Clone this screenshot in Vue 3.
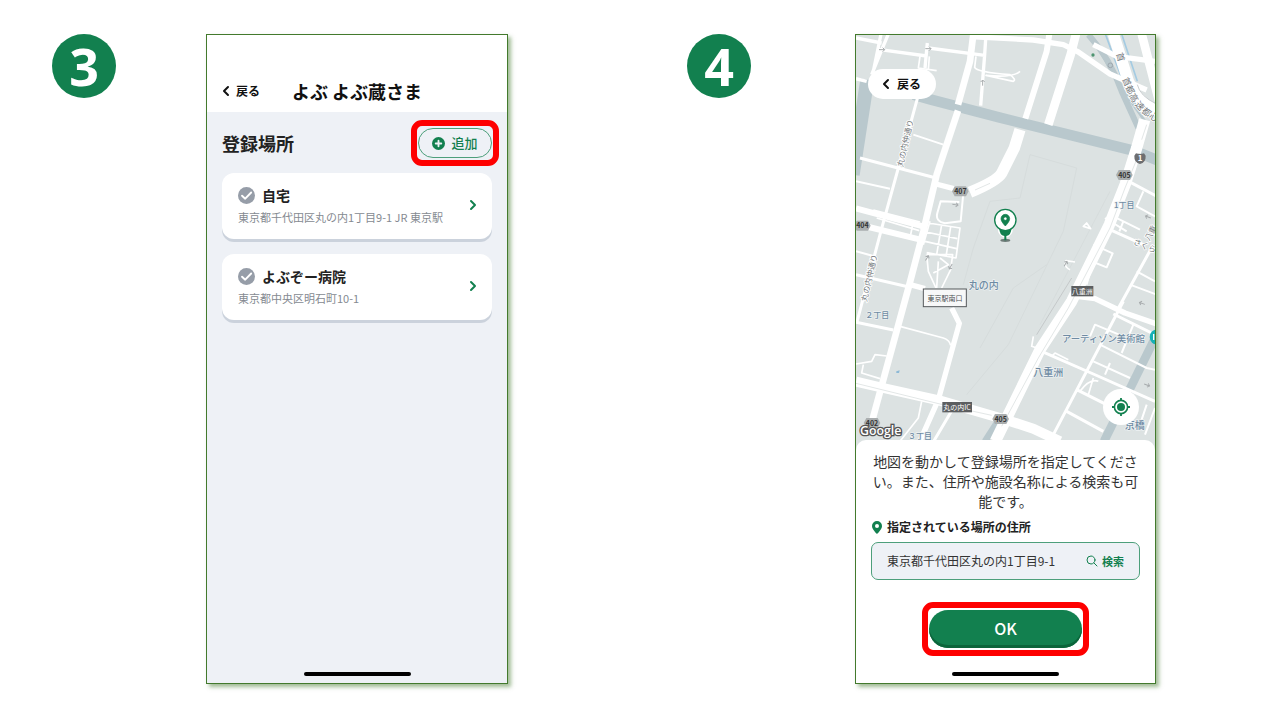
<script setup>
import { ref } from 'vue';

const places = ref([
  { id: 1, name: '自宅', address: '東京都千代田区丸の内1丁目9-1 JR 東京駅' },
  { id: 2, name: 'よぶぞー病院', address: '東京都中央区明石町10-1' },
]);

const address = ref('東京都千代田区丸の内1丁目9-1');

// map roads, grouped by stroke width
const roads = [
  { w: 34, d: 'M1394 285L1370 370 1336 478 1288 600 1175 830 1080 975 946 1250' },
  { w: 30, d: 'M528 1071L610 1090 780 1128 960 1180 1060 1212 1140 1250' },
  { w: 34, d: 'M1020 315L1003 370 965 446Q950 470 870 503' },
  { w: 26, d: 'M1188 28L1172 90 1105 300M1385 28L1440 240' },
  { w: 34, d: 'M1300 28L1345 170Q1375 240 1440 262' },
  { w: 20, d: 'M880 28L870 110 834 240M834 258L770 450 730 620 688 780 606 1080 576 1190' },
  { w: 18, d: 'M1108 28L1100 80 1036 282M528 551L732 606M566 607L718 644' },
  { w: 16, d: 'M870 36L1060 46 1150 60 1195 82 1290 148 1400 196M768 478L830 494M690 780L735 792M815 850L838 896 775 1125 715 1260M1240 60L1310 95 1425 110' },
  { w: 16, d: 'M1190 815L1245 822 1335 865 1430 898' },
  { w: 10, d: 'M528 40L605 55M528 162L560 170M625 28L595 100 575 150M603 28L580 140M595 74L740 94M745 70L914 92M918 28L914 90 902 243M742 55L735 130' },
  { w: 9, d: 'M540 400L768 460M712 222L655 430 604 615 530 895M528 893L640 916M528 750L690 788M1085 980L1240 1048 1425 1130M1330 830L1120 1230M1300 868L1425 930M1420 660L1310 860M1346 470L1440 520M1270 606L1390 660M1190 1095L1290 1145M1160 1160L1270 1220M820 1150L755 1260' },
  { w: 6, d: 'M700 330L790 360M528 470L630 492M528 680L580 694M850 505L842 590 795 596Q765 590 772 565L782 530 838 532M1275 580L1340 620M1300 575L1380 615M1330 590L1318 620M1390 500L1370 545 1425 575M1370 740L1425 770M1350 780L1430 810M1240 660L1298 686 1280 728 1225 706M1230 935L1245 900 1330 935M1360 900L1325 985M1260 960L1400 1030 1425 1035M1240 1010L1350 1060M1290 1015L1275 1050M1425 1150L1395 1230M1400 1140L1375 1215' },
  { w: 5, d: 'M660 905L790 940Q808 945 812 962M528 1018L575 1010 585 990 620 994M550 1020L545 1045 600 1062M725 1130L715 1180 660 1250M888 95L884 128Q890 142 990 150Q1010 165 1000 170L918 152Q1000 160 1020 140M720 95L715 130 770 138M748 95L745 135M580 556L720 592M590 580L718 618M700 590L690 640' },
  { w: 5, d: 'M745 595L840 610 828 700 740 684M738 622L832 642M735 650L830 672M785 600L770 690M812 606L798 696M750 590L730 660M740 690L745 740 768 790M740 690L818 690 812 735 785 790M775 710L770 790M780 700L805 720 760 745' },
  { w: 5, d: 'M1115 995L1125 985 1165 1005M1200 1100Q1230 1060 1255 1070M1225 1110L1240 1060M1225 700L1175 830M1240 712L1220 780M1210 605L1232 612 1220 595ZM1170 735Q1150 725 1158 708L1185 712M1060 935L1055 965 1085 975' },
];

const labels = [
  { x: 866, y: 793, text: '丸の内', size: 30 },
  { x: 1060, y: 1055, text: '八重洲', size: 30 },
  { x: 1334, y: 1213, text: '京橋', size: 30 },
  { x: 1146, y: 953, text: 'アーティゾン美術館', size: 28 },
  { x: 1302, y: 549, text: '1丁目', size: 24 },
  { x: 556, y: 880, text: '２丁目', size: 24 },
  { x: 684, y: 1243, text: '３丁目', size: 24 },
];

const streets = [
  { x: 668, y: 428, angle: -77, text: '丸の内仲通り', size: 24 },
  { x: 560, y: 832, angle: -77, text: '丸の内仲通り', size: 24 },
  { x: 1358, y: 658, angle: 22, text: 'さくら', size: 24 },
  { x: 1408, y: 650, angle: -60, text: '八重', size: 24 },
];

// letters following the expressway curve
const expressway = [
  { x: 1321, y: 97, angle: 75, text: '首' },
  { x: 1340, y: 172, angle: 66, text: '首' },
  { x: 1350, y: 196, angle: 64, text: '都' },
  { x: 1361, y: 220, angle: 60, text: '高' },
  { x: 1379, y: 244, angle: 48, text: '速' },
  { x: 1399, y: 263, angle: 38, text: '都' },
  { x: 1422, y: 278, angle: 28, text: '心' },
];

const shields = [
  { x: 841, y: 500, text: '407' },
  { x: 1333, y: 451, text: '405' },
  { x: 547, y: 603, text: '404' },
  { x: 962, y: 1183, text: '405' },
  { x: 576, y: 1195, text: '402' },
];

// one-way arrows
const arrows = [
  { x: 606, y: 75, angle: 0 },
  { x: 745, y: 72, angle: 0 },
  { x: 908, y: 174, angle: -90 },
  { x: 826, y: 540, angle: 10 },
  { x: 741, y: 700, angle: -60 },
  { x: 812, y: 726, angle: 120 },
  { x: 1157, y: 717, angle: -60 },
  { x: 1404, y: 577, angle: 200 },
  { x: 1386, y: 836, angle: 200 },
  { x: 1401, y: 1081, angle: 20 },
];
</script>

<template>
  <main class="guide">
    <section class="step">
      <div class="number">3</div>

      <div class="phone">
        <header class="header">
          <button class="back" type="button">
            <svg class="chevron" viewBox="0 0 8 12"><path d="M6 2L2 6l4 4" /></svg>
            戻る
          </button>
          <h1>よぶ よぶ蔵さま</h1>
        </header>

        <div class="content">
          <div class="title-row">
            <h2>登録場所</h2>
            <div class="highlight">
              <button class="add" type="button">
                <svg class="plus" viewBox="0 0 14 14">
                  <circle cx="7" cy="7" r="7" fill="#12804f" />
                  <path d="M7 4v6M4 7h6" stroke="#eef1f6" stroke-width="2" stroke-linecap="round" />
                </svg>
                追加
              </button>
            </div>
          </div>

          <button v-for="place in places" :key="place.id" class="place" type="button">
            <span class="place-info">
              <span class="place-name">
                <svg class="check" viewBox="0 0 16 16">
                  <circle cx="8" cy="8" r="8" fill="#969da8" />
                  <path d="M3.8 8.2l3 2.8 5.6-5.8" fill="none" stroke="#fff" stroke-width="1.8" stroke-linecap="round" stroke-linejoin="round" />
                </svg>
                {{ place.name }}
              </span>
              <span class="place-address">{{ place.address }}</span>
            </span>
            <svg class="chevron green" viewBox="0 0 8 12"><path d="M2 2l4 4-4 4" /></svg>
          </button>
        </div>

        <div class="home-bar"></div>
      </div>
    </section>

    <section class="step step-map">
      <div class="number">4</div>

      <div class="phone">
        <div class="map">
          <svg class="map-canvas" viewBox="528 31 897 1245" preserveAspectRatio="xMidYMin slice">
            <rect x="500" y="0" width="1000" height="1300" fill="#dce2e2" />

            <g fill="none" stroke="#d6dcdc" stroke-width="3">
              <path d="M1050 390L1190 430 1150 620 985 960 860 1110M1050 390L1020 520 930 530 880 670 850 780M1100 720L1000 790 900 970M1290 500L1080 900" />
              <path d="M1175 760L1070 930" stroke="#c5c9ca" />
            </g>

            <g fill="none" stroke="#b9c8cd">
              <path d="M562 165L518 450" stroke-width="42" />
              <path d="M700 210L750 224 960 279 1360 378 1440 410" stroke-width="32" />
              <path d="M1430 930L1272 1250" stroke-width="26" />
              <path d="M960 1180L915 1250" stroke-width="20" />
              <path d="M1225 30Q1290 100 1325 200L1375 310" stroke-width="18" />
              <path d="M1250 60L1310 170 1395 290" stroke-width="8" />
            </g>
            <path d="M1276 28L1325 160Q1350 220 1385 260M1325 28L1372 170" fill="none" stroke="#a4cbe2" stroke-width="5" />

            <path v-for="(road, i) in roads" :key="i" :d="road.d" :stroke-width="road.w" fill="none" stroke="#fff" stroke-linejoin="round" />
            <path d="M1378 385L1335 490 1290 610 1165 850 1075 1000 965 1205M528 1076L780 1138 935 1172M885 496L930 476M1400 300L1385 345" fill="none" stroke="#e3e7e7" stroke-width="3" />
            <path d="M1372 180Q1380 215 1430 238" fill="none" stroke="#c9ced0" stroke-width="3" />

            <g v-for="(arrow, i) in arrows" :key="i" :transform="`translate(${arrow.x} ${arrow.y}) rotate(${arrow.angle})`">
              <path d="M-9 0H8M2 -6l6 6-6 6" fill="none" stroke="#a7abad" stroke-width="3" />
            </g>
            <circle cx="1239" cy="91" r="5" fill="#4d9470" />
            <circle cx="1291" cy="122" r="7" fill="none" stroke="#9da6ad" stroke-width="3" />
            <path d="M649 1040l10-3-2 8h-8z" fill="#8db9d6" />

            <g class="label">
              <text v-for="(label, i) in labels" :key="i" :x="label.x" :y="label.y" :font-size="label.size">{{ label.text }}</text>
            </g>
            <g class="street">
              <text v-for="(street, i) in streets" :key="i" :font-size="street.size" :transform="`translate(${street.x} ${street.y}) rotate(${street.angle})`">{{ street.text }}</text>
              <text v-for="(letter, i) in expressway" :key="i" font-size="27" text-anchor="middle" dy="9" :transform="`translate(${letter.x} ${letter.y}) rotate(${letter.angle})`">{{ letter.text }}</text>
            </g>

            <g v-for="(shield, i) in shields" :key="i" class="shield" :transform="`translate(${shield.x} ${shield.y})`">
              <path d="M-17 -15H17L25 0 17 15H-17L-25 0z" />
              <text y="8">{{ shield.text }}</text>
            </g>
            <g transform="translate(1380 400)">
              <path d="M-12 -14Q0 -10 12 -14L17 -7Q18 14 0 18Q-18 14 -17 -7z" fill="#6d6e70" />
              <text y="9" font-size="24" font-weight="bold" fill="#fff" text-anchor="middle">1</text>
            </g>

            <g class="plate">
              <rect x="1174" y="784" width="66" height="31" />
              <text x="1207" y="808">八重洲</text>
              <rect x="787" y="1132" width="89" height="31" />
              <text x="831" y="1156">丸の内IC</text>
            </g>

            <rect x="730" y="793" width="129" height="53" fill="#f7f8f8" stroke="#55595b" stroke-width="3" />
            <text x="795" y="828" font-size="21" fill="#4c5052" text-anchor="middle">東京駅南口</text>

            <circle cx="1432" cy="937" r="23" fill="#16b1b5" />
            <path d="M1421 928v18" stroke="#fff" stroke-width="4" />

            <!-- selected point -->
            <ellipse cx="976" cy="647" rx="15" ry="5" fill="#6e7b78" />
            <path d="M954 612h44q2 20-22 28q-24-8-22-28z" fill="#fff" />
            <path d="M958 612h36q0 18-15 22v13h-6v-13q-15-4-15-22z" fill="#12804f" />
            <circle cx="976" cy="586" r="32" fill="#fff" stroke="#12804f" stroke-width="4" />
            <path d="M976 569a13 13 0 0 0-13 13c0 9 13 22 13 22s13-13 13-22a13 13 0 0 0-13-13zm0 18a5 5 0 1 1 0-10a5 5 0 0 1 0 10z" fill="#12804f" stroke="#12804f" stroke-width="2" />

            <text class="google" x="540" y="1230">Google</text>
          </svg>

          <button class="back back-map" type="button">
            <svg class="chevron" viewBox="0 0 8 12"><path d="M6 2L2 6l4 4" /></svg>
            戻る
          </button>

          <button class="locate" type="button" aria-label="現在地">
            <svg viewBox="0 0 18 18">
              <circle cx="9" cy="9" r="6.6" fill="none" stroke="#12804f" stroke-width="1.6" />
              <circle cx="9" cy="9" r="4" fill="#12804f" />
              <path d="M9 0v3M9 15v3M0 9h3M15 9h3" stroke="#12804f" stroke-width="1.8" />
            </svg>
          </button>
        </div>

        <form class="sheet" @submit.prevent>
          <p>地図を動かして登録場所を指定してください。また、住所や施設名称による検索も可能です。</p>

          <label class="address-label" for="address">
            <svg class="pin" viewBox="0 0 10 13">
              <path d="M5 0a5 5 0 0 0-5 5c0 3.600 5 8 5 8s5-4.400 5-8a5 5 0 0 0-5-5zm0 7a2 2 0 1 1 0-4a2 2 0 0 1 0 4z" fill="#12804f" />
            </svg>
            指定されている場所の住所
          </label>

          <div class="address-box">
            <input id="address" v-model="address" type="text" />
            <button class="search" type="button">
              <svg viewBox="0 0 12 12">
                <circle cx="5" cy="5" r="4" />
                <path d="M8 8l3 3" />
              </svg>
              検索
            </button>
          </div>

          <div class="highlight highlight-ok">
            <button class="ok" type="submit">OK</button>
          </div>
        </form>

        <div class="home-bar"></div>
      </div>
    </section>
  </main>
</template>

<style>
body {
  margin: 0;
  background: #fff;
}
</style>

<style scoped>
.guide {
  display: grid;
  grid-template-columns: 1fr 1fr;
  padding: 34px 0;
  font-family: "Noto Sans CJK JP", sans-serif;
  color: #222;
}

.step {
  display: flex;
  align-items: flex-start;
  gap: 90px;
  padding-left: 52px;
}

.step-map {
  gap: 104px;
  padding-left: 47px;
}

.number {
  flex: none;
  width: 64px;
  height: 64px;
  border-radius: 50%;
  background: #12804f;
  color: #fff;
  font: bold 52px/64px "Noto Sans", sans-serif;
  text-align: center;
}

/* Phone */
.phone {
  box-sizing: border-box;
  display: flex;
  flex: 1;
  flex-direction: column;
  max-width: 302px;
  min-height: 650px;
  border: 1px solid #437a2d;
  background: #fff;
  box-shadow: 3px 3px 4px rgba(67, 122, 45, 0.5);
}

.step:first-child .phone {
  background: #eef1f6;
}

button,
input {
  margin: 0;
  padding: 0;
  border: none;
  background: none;
  color: inherit;
  font-family: inherit;
}

h1,
h2,
p {
  margin: 0;
}

.header {
  display: flex;
  align-items: center;
  gap: 32px;
  padding: 41px 15px 6px;
  background: #fff;
  color: #111;
}

h1,
h2 {
  font-size: 18px;
  font-weight: 700;
  line-height: 30px;
}

.back {
  display: flex;
  align-items: center;
  gap: 6px;
  font-size: 12px;
  font-weight: 700;
  line-height: 18px;
}

.chevron {
  width: 8px;
  height: 12px;
  fill: none;
  stroke: #111;
  stroke-width: 2;
  stroke-linecap: round;
  stroke-linejoin: round;
}

.chevron.green {
  stroke: #12804f;
}

/* Places */
.content {
  display: flex;
  flex-direction: column;
  gap: 15px;
  padding: 16px 15px;
}

.title-row {
  display: flex;
  align-items: center;
  justify-content: space-between;
}

/* Red frame around the button to press */
.highlight {
  position: relative;
}

.highlight::after {
  content: "";
  position: absolute;
  inset: -8px -7px;
  border: 6px solid #fe0000;
  border-radius: 11px;
  pointer-events: none;
}

.add {
  display: flex;
  align-items: center;
  justify-content: center;
  gap: 6px;
  box-sizing: border-box;
  width: 74px;
  height: 30px;
  border: 1px solid #4d9f7b;
  border-radius: 15px;
  color: #12804f;
  font-size: 13px;
  font-weight: 500;
  line-height: 18px;
}

.plus {
  width: 13px;
  height: 13px;
}

.place {
  display: flex;
  align-items: center;
  justify-content: space-between;
  height: 66px;
  padding: 0 15px 2px 16px;
  border-radius: 12px;
  background: #fff;
  box-shadow: 0 3px 0 #cbd2dc;
  text-align: left;
}

.place-info {
  display: flex;
  flex-direction: column;
  gap: 2px;
}

.place-name {
  display: flex;
  align-items: center;
  gap: 7px;
  font-size: 14px;
  font-weight: 700;
  line-height: 22px;
}

.check {
  width: 17px;
  height: 17px;
}

.place-address {
  color: #858a91;
  font-size: 11px;
  line-height: 18px;
}

.home-bar {
  flex: none;
  width: 107px;
  height: 4px;
  margin: auto auto 7px;
  border-radius: 2px;
  background: #000;
}

/* Map */
.step-map .phone {
  max-width: 301px;
}

.map {
  position: relative;
  height: 415px;
  overflow: hidden;
}

.map-canvas {
  display: block;
  width: 100%;
  height: 100%;
}

.label {
  fill: #6f8ba3;
  font-weight: 500;
  paint-order: stroke;
  stroke: #eef2f3;
  stroke-width: 4px;
}

.street {
  fill: #74797c;
  paint-order: stroke;
  stroke: #fff;
  stroke-width: 5px;
}

.shield path {
  fill: #aaaeaf;
}

.shield text {
  fill: #333;
  font-size: 21px;
  font-weight: bold;
  text-anchor: middle;
}

.plate rect {
  fill: #5c5e60;
}

.plate text {
  fill: #fff;
  font-size: 21px;
  text-anchor: middle;
}

.google {
  fill: #fff;
  paint-order: stroke;
  stroke: #555;
  stroke-width: 8px;
  font-family: "Open Sans", sans-serif;
  font-size: 37px;
  font-weight: 600;
}

.back-map {
  position: absolute;
  top: 34px;
  left: 12px;
  gap: 7px;
  padding: 6px 15px 6px 14px;
  border-radius: 15px;
  background: #fff;
  color: #111;
}

.locate {
  position: absolute;
  right: 16px;
  bottom: 25px;
  display: flex;
  align-items: center;
  justify-content: center;
  width: 36px;
  height: 36px;
  border-radius: 50%;
  background: #fff;
}

.locate svg {
  width: 18px;
  height: 18px;
}

/* Bottom sheet */
.sheet {
  position: relative;
  display: flex;
  flex-direction: column;
  margin-top: -10px;
  padding: 11px 15px 24px;
  border-radius: 10px 10px 0 0;
  background: #fff;
}

.sheet p {
  color: #333;
  font-size: 14px;
  line-height: 20px;
  text-align: center;
}

.address-label {
  display: flex;
  align-items: center;
  gap: 5px;
  margin: 7px 0 6px;
  padding-left: 1px;
  font-size: 12px;
  font-weight: 700;
  line-height: 18px;
}

.pin {
  width: 10px;
  height: 13px;
}

.address-box {
  display: flex;
  align-items: center;
  box-sizing: border-box;
  height: 38px;
  padding: 0 15px;
  border: 1px solid #4d9f7b;
  border-radius: 7px;
  background: #eef1f6;
}

.address-box input {
  flex: 1;
  min-width: 0;
  outline: none;
  color: #333;
  font-size: 12px;
  line-height: 18px;
}

.search {
  display: flex;
  align-items: center;
  gap: 4px;
  color: #12804f;
  font-size: 11px;
  font-weight: 700;
}

.search svg {
  width: 12px;
  height: 12px;
  fill: none;
  stroke: #12804f;
  stroke-linecap: round;
}

.highlight-ok {
  align-self: center;
  width: 153px;
  margin-top: 30px;
}

.ok {
  display: block;
  width: 100%;
  height: 38px;
  padding-bottom: 3px;
  border-radius: 19px;
  background: #12804f;
  box-shadow: inset 0 -3px 0 #0b653b;
  color: #fff;
  font-size: 16px;
  font-weight: 500;
  line-height: 22px;
}
</style>
